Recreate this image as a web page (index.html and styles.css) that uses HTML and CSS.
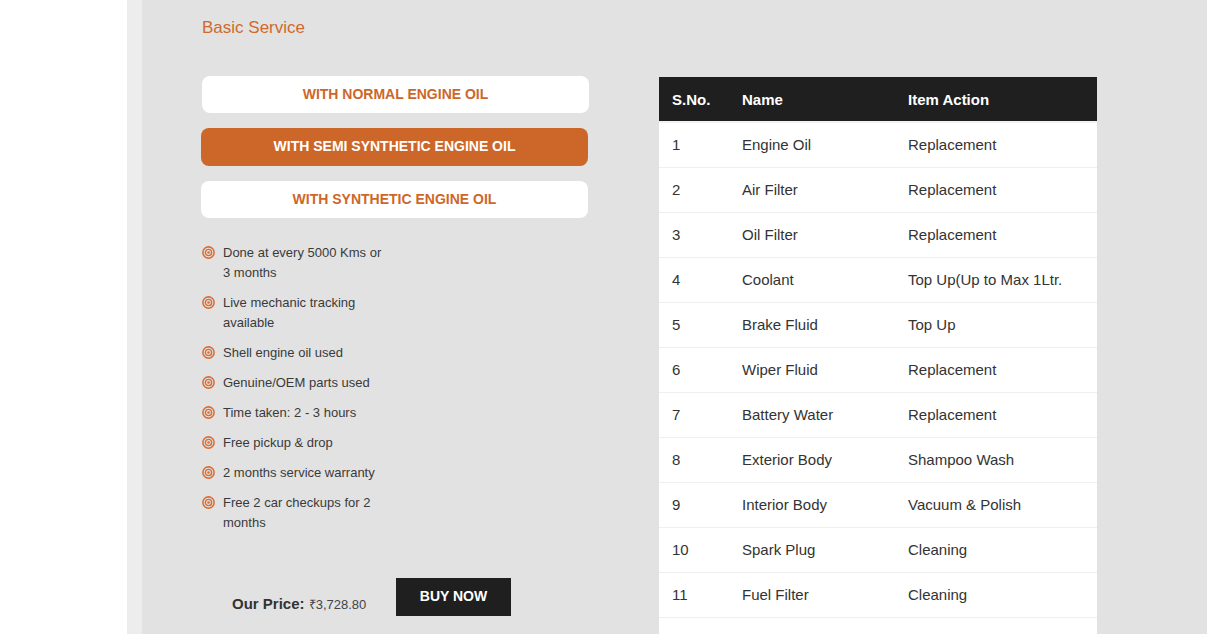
FILE: index.html
```html
<!DOCTYPE html>
<html lang="en">
<head>
<meta charset="utf-8">
<title>Basic Service</title>
<link rel="stylesheet" href="styles.css">
</head>
<body>
<div class="page">
  <div class="gutter"></div>
  <div class="strip"></div>
  <main class="main">
    <h2 class="title">Basic Service</h2>
    <div class="content">
      <section class="left">
        <div class="options">
          <button class="opt">WITH NORMAL ENGINE OIL</button>
          <button class="opt active">WITH SEMI SYNTHETIC ENGINE OIL</button>
          <button class="opt">WITH SYNTHETIC ENGINE OIL</button>
        </div>
        <ul class="features">
          <li><svg class="bullet" viewBox="0 0 12 12"><circle cx="6" cy="6" r="5.2" fill="none" stroke="currentColor" stroke-width="1.4"/><circle cx="6" cy="6" r="2.9" fill="none" stroke="currentColor" stroke-width="1.3"/><circle cx="6" cy="6" r="1.2" fill="currentColor"/></svg><span>Done at every 5000 Kms or 3 months</span></li>
          <li><svg class="bullet" viewBox="0 0 12 12"><circle cx="6" cy="6" r="5.2" fill="none" stroke="currentColor" stroke-width="1.4"/><circle cx="6" cy="6" r="2.9" fill="none" stroke="currentColor" stroke-width="1.3"/><circle cx="6" cy="6" r="1.2" fill="currentColor"/></svg><span>Live mechanic tracking available</span></li>
          <li><svg class="bullet" viewBox="0 0 12 12"><circle cx="6" cy="6" r="5.2" fill="none" stroke="currentColor" stroke-width="1.4"/><circle cx="6" cy="6" r="2.9" fill="none" stroke="currentColor" stroke-width="1.3"/><circle cx="6" cy="6" r="1.2" fill="currentColor"/></svg><span>Shell engine oil used</span></li>
          <li><svg class="bullet" viewBox="0 0 12 12"><circle cx="6" cy="6" r="5.2" fill="none" stroke="currentColor" stroke-width="1.4"/><circle cx="6" cy="6" r="2.9" fill="none" stroke="currentColor" stroke-width="1.3"/><circle cx="6" cy="6" r="1.2" fill="currentColor"/></svg><span>Genuine/OEM parts used</span></li>
          <li><svg class="bullet" viewBox="0 0 12 12"><circle cx="6" cy="6" r="5.2" fill="none" stroke="currentColor" stroke-width="1.4"/><circle cx="6" cy="6" r="2.9" fill="none" stroke="currentColor" stroke-width="1.3"/><circle cx="6" cy="6" r="1.2" fill="currentColor"/></svg><span>Time taken: 2 - 3 hours</span></li>
          <li><svg class="bullet" viewBox="0 0 12 12"><circle cx="6" cy="6" r="5.2" fill="none" stroke="currentColor" stroke-width="1.4"/><circle cx="6" cy="6" r="2.9" fill="none" stroke="currentColor" stroke-width="1.3"/><circle cx="6" cy="6" r="1.2" fill="currentColor"/></svg><span>Free pickup &amp; drop</span></li>
          <li><svg class="bullet" viewBox="0 0 12 12"><circle cx="6" cy="6" r="5.2" fill="none" stroke="currentColor" stroke-width="1.4"/><circle cx="6" cy="6" r="2.9" fill="none" stroke="currentColor" stroke-width="1.3"/><circle cx="6" cy="6" r="1.2" fill="currentColor"/></svg><span>2 months service warranty</span></li>
          <li><svg class="bullet" viewBox="0 0 12 12"><circle cx="6" cy="6" r="5.2" fill="none" stroke="currentColor" stroke-width="1.4"/><circle cx="6" cy="6" r="2.9" fill="none" stroke="currentColor" stroke-width="1.3"/><circle cx="6" cy="6" r="1.2" fill="currentColor"/></svg><span>Free 2 car checkups for 2 months</span></li>
        </ul>
        <div class="buy">
          <p class="price"><strong>Our Price:</strong> <span class="amount">₹3,728.80</span></p>
          <button class="buy-btn">BUY NOW</button>
        </div>
      </section>
      <section class="right">
        <table class="items">
          <thead>
            <tr><th class="c1">S.No.</th><th class="c2">Name</th><th class="c3">Item Action</th></tr>
          </thead>
          <tbody>
            <tr><td>1</td><td>Engine Oil</td><td>Replacement</td></tr>
            <tr><td>2</td><td>Air Filter</td><td>Replacement</td></tr>
            <tr><td>3</td><td>Oil Filter</td><td>Replacement</td></tr>
            <tr><td>4</td><td>Coolant</td><td>Top Up(Up to Max 1Ltr.</td></tr>
            <tr><td>5</td><td>Brake Fluid</td><td>Top Up</td></tr>
            <tr><td>6</td><td>Wiper Fluid</td><td>Replacement</td></tr>
            <tr><td>7</td><td>Battery Water</td><td>Replacement</td></tr>
            <tr><td>8</td><td>Exterior Body</td><td>Shampoo Wash</td></tr>
            <tr><td>9</td><td>Interior Body</td><td>Vacuum &amp; Polish</td></tr>
            <tr><td>10</td><td>Spark Plug</td><td>Cleaning</td></tr>
            <tr><td>11</td><td>Fuel Filter</td><td>Cleaning</td></tr>
            <tr class="more"><td></td><td></td><td></td></tr>
          </tbody>
        </table>
      </section>
    </div>
  </main>
</div>
</body>
</html>
```

FILE: styles.css
```css
* { box-sizing: border-box; }
html, body { margin: 0; padding: 0; }
body {
  font-family: "Liberation Sans", Arial, sans-serif;
  color: #333;
  background: #fff;
  overflow: hidden;
}
.page {
  display: flex;
  min-height: 634px;
}
.gutter { width: 127px; flex: none; background: #fff; }
.strip { width: 15px; flex: none; background: #eeedee; }
.main {
  flex: 1;
  background: #e2e2e2;
  padding: 18px 0 0 59px;
}
.title {
  margin: 0 0 0 1px;
  font-size: 17px;
  line-height: 20px;
  font-weight: normal;
  color: #d0692c;
}
.content {
  display: flex;
  gap: 70px;
  margin-top: 38px;
}
.left { width: 388px; flex: none; }
.options {
  display: flex;
  flex-direction: column;
  gap: 15px;
}
.opt {
  display: block;
  width: 387px;
  height: 37px;
  border: 0;
  border-radius: 8px;
  background: #fff;
  color: #cd6729;
  font-family: "Liberation Sans", Arial, sans-serif;
  font-size: 14px;
  font-weight: bold;
  cursor: pointer;
  padding: 0 0 2px;
}
.opt:first-child { margin-left: 1px; }
.opt.active {
  height: 38px;
  background: #cd6729;
  color: #fff;
}
.features {
  list-style: none;
  margin: 25px 0 0;
  padding: 0;
  width: 190px;
}
.features li {
  display: flex;
  align-items: flex-start;
  gap: 8px;
  font-size: 13px;
  line-height: 20px;
  color: #3a3a3a;
  margin-bottom: 10px;
}
.bullet {
  width: 13px;
  height: 13px;
  flex: none;
  margin: 3px 0 0 1px;
  color: #d96d33;
}
.buy {
  display: flex;
  align-items: flex-start;
  margin-top: 46px;
  padding-left: 31px;
}
.price {
  margin: 16px 0 0;
  width: 164px;
  font-size: 15px;
  line-height: 18px;
  color: #444;
}
.price strong { color: #333; }
.price .amount { font-size: 13px; }
.buy-btn {
  width: 115px;
  height: 38px;
  border: 0;
  background: #1f1f1f;
  color: #fff;
  font-family: "Liberation Sans", Arial, sans-serif;
  font-size: 14px;
  font-weight: bold;
  padding: 0 0 2px;
  margin-top: -1px;
}
.right { flex: none; }
.items {
  width: 438px;
  border-collapse: collapse;
  background: #fff;
  font-size: 15px;
  margin-top: 1px;
}
.items th {
  background: #1f1f1f;
  color: #fff;
  text-align: left;
  font-weight: bold;
  height: 45px;
  padding: 0 13px;
  border-bottom: 2px solid #f2f2f2;
}
.items .c1 { width: 70px; }
.items .c2 { width: 166px; }
.items td {
  height: 45px;
  padding: 0 13px;
  border-bottom: 1px solid #efefef;
  color: #333;
}
```
